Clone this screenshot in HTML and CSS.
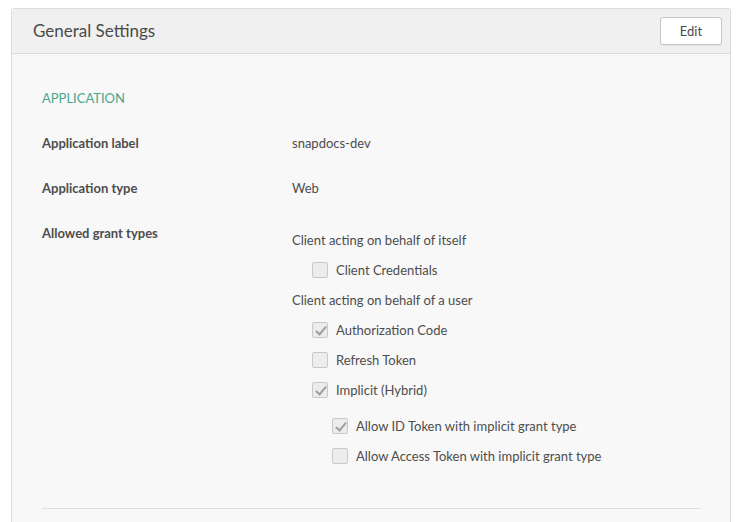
FILE: index.html
```html
<!DOCTYPE html>
<html>
<head>
<meta charset="utf-8">
<link rel="stylesheet" href="styles.css">
</head>
<body>
<div class="panel">
  <div class="panel-head">
    <h2 class="title">General Settings</h2>
    <button class="btn">Edit</button>
  </div>
  <div class="panel-body">
    <h3 class="section">APPLICATION</h3>
    <div class="row">
      <div class="label">Application label</div>
      <div class="value">snapdocs-dev</div>
    </div>
    <div class="row">
      <div class="label">Application type</div>
      <div class="value">Web</div>
    </div>
    <div class="row row-grants">
      <div class="label">Allowed grant types</div>
      <div class="value grants">
        <div class="group">Client acting on behalf of itself</div>
        <div class="check"><span class="box"></span>Client Credentials</div>
        <div class="group">Client acting on behalf of a user</div>
        <div class="check"><span class="box on"></span>Authorization Code</div>
        <div class="check"><span class="box"></span>Refresh Token</div>
        <div class="check"><span class="box on"></span>Implicit (Hybrid)</div>
        <div class="nested">
          <div class="check"><span class="box on"></span>Allow ID Token with implicit grant type</div>
          <div class="check"><span class="box"></span>Allow Access Token with implicit grant type</div>
        </div>
      </div>
    </div>
    <div class="divider"></div>
  </div>
</div>
</body>
</html>
```
FILE: styles.css
```css
* { box-sizing: border-box; }
html, body { margin: 0; background: #fff; }
body {
  padding: 8px 8px 0 11px;
  font-family: Lato, "Liberation Sans", sans-serif;
  color: #4a4a4a;
  height: 522px;
  overflow: hidden;
}
.panel {
  width: 720px;
  border: 1px solid #dcdcdc;
  border-bottom: none;
  border-radius: 3px 3px 0 0;
  background: #f8f8f8;
  height: 520px;
}
.panel-head {
  height: 45px;
  background: #f0f0f0;
  border-bottom: 1px solid #dadada;
  display: flex;
  align-items: center;
  justify-content: space-between;
  padding: 0 8px 0 21px;
}
.title {
  margin: 0 0 2px;
  font-size: 17px;
  font-weight: 400;
  color: #4a4a4a;
}
.btn {
  width: 62px;
  height: 28px;
  background: #fff;
  border: 1px solid #c6c6c6;
  border-radius: 3px;
  font-family: inherit;
  font-size: 13px;
  color: #4a4a4a;
  box-shadow: 0 1px 1px rgba(0,0,0,0.06);
}
.panel-body {
  padding: 35px 30px 0 30px;
}
.section {
  margin: 0 0 27px;
  font-size: 13px;
  font-weight: 400;
  color: #4aa68a;
  line-height: 18px;
}
.row {
  display: flex;
  font-size: 13px;
  line-height: 18px;
  margin-bottom: 27px;
}
.label {
  width: 250px;
  font-weight: 700;
  color: #4d4d4d;
}
.value { color: #4d4d4d; }
.row-grants { margin-bottom: 0; }
.grants { padding-top: 7px; }
.group { height: 30px; line-height: 18px; }
.check {
  display: flex;
  align-items: center;
  height: 30px;
  padding-left: 20px;
  margin-top: -6px;
  margin-bottom: 6px;
}
.nested { padding-left: 20px; padding-top: 6px; }
.box {
  width: 16px;
  height: 16px;
  border: 1px solid #c9c9c9;
  border-radius: 2px;
  background: #ececec;
  margin-right: 8px;
  position: relative;
}
.box.on::after {
  content: "";
  position: absolute;
  left: 5px;
  top: 1px;
  width: 4px;
  height: 9px;
  border-right: 2px solid #a0a0a0;
  border-bottom: 2px solid #a0a0a0;
  transform: rotate(40deg);
}
.divider {
  margin-top: 31px;
  border-top: 1px solid #dedede;
}
```
